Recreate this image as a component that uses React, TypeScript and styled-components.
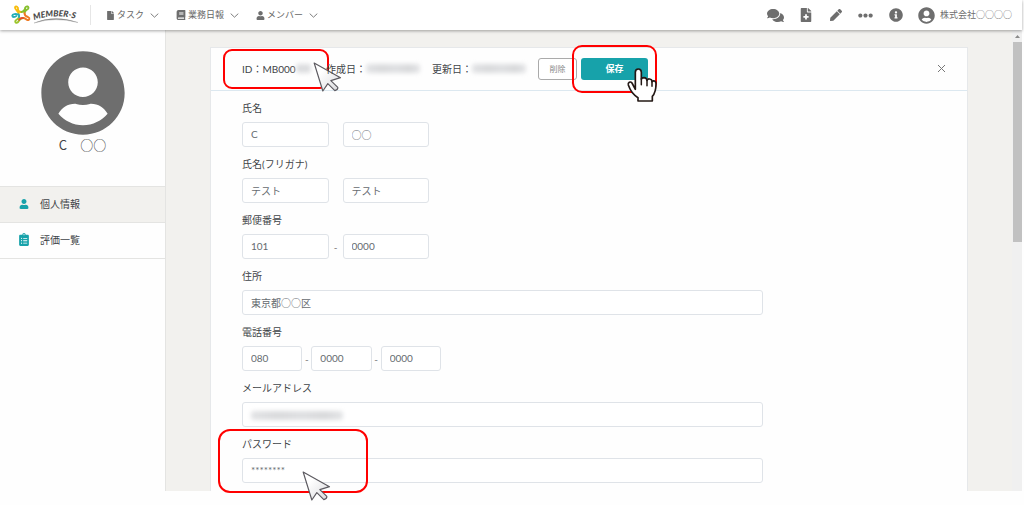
import React from "react";
import styled, { createGlobalStyle } from "styled-components";
import {
  FaBook,
  FaClipboardList,
  FaComments,
  FaEllipsisH,
  FaFile,
  FaFileMedical,
  FaInfoCircle,
  FaPen,
  FaUser,
  FaUserCircle,
} from "react-icons/fa";

const teal = "#17a2aa";
const sand = "#f2f1ee";
const line = "#dfe3e8";
const ink = "#3f4448";
const iconGray = "#6e6e6e";
const latinFirst = 'Lato, "Noto Sans CJK JP", sans-serif';
const kanjiFirst = '"Noto Sans CJK JP", sans-serif';

const GlobalStyle = createGlobalStyle`
  *, *::before, *::after { box-sizing: border-box; }
  body {
    margin: 0;
    background: #fefefe;
    color: ${ink};
    font-family: ${latinFirst};
    font-size: 10px;
    line-height: 16px;
  }
  button, input { font: inherit; color: inherit; }
`;

const Page = styled.div`
  min-height: 100vh;
  padding: 0 2px 15px 0;
  display: flex;
  flex-direction: column;
  overflow: hidden;
`;

const Header = styled.header`
  position: relative;
  z-index: 1;
  height: 30px;
  padding: 0 10px 0 11px;
  display: flex;
  align-items: center;
  background: #fff;
  box-shadow: 0 1px 3px rgba(0, 0, 0, 0.35);
`;

const LogoLink = styled.a`
  display: flex;
  width: 80px;
  height: 20px;
  border-right: 1px solid #e6e6e6;
`;

const Nav = styled.nav`
  display: flex;
  flex: 1;
  padding-left: 15px;
  gap: 17px;
`;

const NavButton = styled.button`
  display: flex;
  align-items: center;
  padding: 0;
  border: 0;
  background: none;
  font-size: 9px;
  color: #666;
  white-space: nowrap;
  svg { color: ${iconGray}; }
  span { margin: 0 6px 0 2px; }
`;

const IconButton = styled.button`
  display: flex;
  align-items: center;
  justify-content: center;
  width: 30px;
  height: 24px;
  padding: 0;
  border: 0;
  background: none;
  color: ${iconGray};
`;

const AccountButton = styled(IconButton)`
  width: auto;
  gap: 5px;
  padding-left: 7px;
  font-family: ${kanjiFirst};
  font-size: 9px;
  white-space: nowrap;
`;

const Body = styled.div`
  flex: 1;
  display: flex;
`;

const Sidebar = styled.aside`
  flex: none;
  width: 166px;
  border-right: 1px solid #e4e4e2;
  background: #fefefe;
`;

const Profile = styled.div`
  height: 156px;
  padding-top: 20px;
  display: flex;
  flex-direction: column;
  align-items: center;
  font-family: ${kanjiFirst};
  font-size: 13px;
  line-height: 18px;
  color: ${iconGray};
  p { margin: 0; color: ${ink}; }
`;

const SideLink = styled.a<{ $active?: boolean }>`
  display: flex;
  align-items: center;
  gap: 10px;
  height: ${(p) => (p.$active ? 37 : 36)}px;
  padding: 0 0 2px 18px;
  border-bottom: 1px solid #e4e4e2;
  border-top: ${(p) => (p.$active ? "1px solid #e4e4e2" : "0")};
  background: ${(p) => (p.$active ? sand : "transparent")};
  color: ${ink};
  text-decoration: none;
  svg { flex: none; width: 12px; color: ${teal}; }
`;

const Main = styled.main`
  flex: 1;
  min-width: 0;
  padding: 17px 44px 0;
  display: flex;
  background: ${sand};
`;

const Card = styled.form`
  flex: 1;
  min-width: 0;
  border: 1px solid #e6e8ea;
  border-bottom: 0;
  background: #fefefe;
`;

const CardHeader = styled.div`
  display: flex;
  align-items: center;
  height: 43px;
  padding: 0 15px 1px 31px;
  border-bottom: 1px solid #dce8f0;
  white-space: nowrap;
`;

const Meta = styled.div<{ $width: number }>`
  position: relative;
  display: flex;
  align-items: center;
  width: ${(p) => p.$width}px;
`;

const Smudge = styled.span<{ $width: number }>`
  display: block;
  width: ${(p) => p.$width}px;
  height: 9px;
  border-radius: 3px;
  background: linear-gradient(90deg, #e2e3e5, #d9dadc 30%, #dfe0e2 55%, #d8d9db 80%, #e4e5e7);
  filter: blur(2px);
`;

const DeleteButton = styled.button`
  width: 39px;
  height: 22px;
  padding: 0;
  border: 1px solid #aaa;
  border-radius: 3px;
  background: #fff;
  font-size: 8px;
  color: #888;
`;

const SaveSlot = styled.div`
  position: relative;
  margin-left: 4px;
`;

const SaveButton = styled.button`
  display: block;
  width: 67px;
  height: 22px;
  padding: 0;
  border: 0;
  border-radius: 3px;
  background: ${teal};
  font-size: 9px;
  font-weight: 700;
  color: #fff;
`;

const CloseButton = styled.button`
  display: flex;
  margin-left: auto;
  padding: 6px;
  border: 0;
  background: none;
  color: #777;
`;

const Fields = styled.div`
  width: 583px;
  max-width: 100%;
  padding: 9px 31px 8px;
  display: grid;
  gap: 9px;
`;

const Field = styled.fieldset`
  position: relative;
  min-width: 0;
  margin: 0;
  padding: 0;
  border: 0;
`;

const FieldLabel = styled.label`
  display: block;
  height: 22px;
`;

const Row = styled.div<{ $columns: string; $width?: string }>`
  display: grid;
  grid-template-columns: ${(p) => p.$columns};
  width: ${(p) => p.$width ?? "100%"};
  align-items: center;
  text-align: center;
  color: #777;
`;

const TextInput = styled.input<{ $kanji?: boolean }>`
  width: 100%;
  min-width: 0;
  height: 25px;
  padding: 0 8px 1px;
  border: 1px solid ${line};
  border-radius: 3px;
  background: #fff;
  color: #666b70;
  font-family: ${(p) => (p.$kanji ? kanjiFirst : latinFirst)};
`;

const FieldSmudge = styled.div`
  position: absolute;
  left: 9px;
  bottom: 7px;
`;

const Highlight = styled.div<{ $inset: string; $radius: number }>`
  position: absolute;
  inset: ${(p) => p.$inset};
  border: 2px solid #f00;
  border-radius: ${(p) => p.$radius}px;
  pointer-events: none;
`;

const Pointer = styled.svg<{ $left: number; $top: number }>`
  position: absolute;
  left: ${(p) => p.$left}px;
  top: ${(p) => p.$top}px;
  overflow: visible;
  pointer-events: none;
`;

const ScrollTrack = styled.div`
  flex: none;
  width: 10px;
  padding: 4px 0 0 1px;
  display: flex;
  flex-direction: column;
  align-items: center;
  gap: 3px;
  background: #f0f0f0;
`;

const ScrollThumb = styled.div`
  width: 9px;
  height: 200px;
  background: #c1c1c1;
`;

const Logo = () => (
  <svg width="70" height="20" viewBox="0 0 70 20" aria-label="MEMBER-S" role="img">
    <g fill="none" strokeWidth="1.9" strokeLinecap="round" strokeLinejoin="round">
      <path d="M7.800 9C7.500 6 3.500 4.500 4 2.300C5 0.500 7.500 2 7 4C7 6 8.500 7.200 10.500 7" stroke="#f8bd0c" />
      <path d="M10.500 7C13.500 6.500 14 4.500 14.300 2.500C15.500 0.500 18 1.500 17.300 3.300C16.500 5 14 5 13.500 8" stroke="#86bf2c" />
      <path d="M13.500 8C13.500 10.500 15 11.500 17 12C19.300 13 18.500 15.500 16.500 15C14.500 14.500 14.500 12.800 12 13" stroke="#f07a22" />
      <path d="M12 13C9 13 8.500 14.500 7.500 16.500C6.500 18.500 3.800 18 4.300 16C5 14.300 7.500 14.500 8 12" stroke="#9cc62c" />
      <path d="M12 13C10 12.900 8.900 13.500 8.200 14.700" stroke="#e94b2b" />
      <path d="M8 12C8.300 10.500 8 9.500 7 9.300C5 8.800 1.500 8.800 1.300 10.700C1.500 12.600 4 12.300 5.500 10.800" stroke="#25aeb5" />
    </g>
    <path id="logo-arc" d="M23 15Q44 8 68 14.500" fill="none" />
    <path d="M23 18Q44 9.500 67 17.500Q44 11.500 23 18Z" fill="#888" stroke="#888" strokeWidth="0.3" />
    <text fontFamily="Lato, sans-serif" fontSize="8.500" fontWeight="900" fontStyle="italic" fill="#4b4b4b">
      <textPath href="#logo-arc">MEMBER-S</textPath>
    </text>
  </svg>
);

const Chevron = () => (
  <svg width="9" height="5" viewBox="0 0 9 5" fill="none" stroke="currentColor" strokeWidth="0.9">
    <path d="M0.700 0.600L4.500 4.200L8.300 0.600" />
  </svg>
);

const Arrow = ({ left, top }: { left: number; top: number }) => (
  <Pointer $left={left} $top={top} width="27" height="28" viewBox="0 0 80 84" aria-hidden="true">
    <defs>
      <linearGradient id={`arrow-${left}`} x1="0" y1="0" x2="1" y2="1">
        <stop offset="0.300" stopColor="#fff" />
        <stop offset="1" stopColor="#d9d9dc" />
      </linearGradient>
    </defs>
    <path
      d="M0 0L79 44L50 53L71 73Q72 80 62 83L41 62L26 84Z"
      fill={`url(#arrow-${left})`}
      stroke="#5c5a60"
      strokeWidth="3.500"
      strokeLinejoin="round"
    />
  </Pointer>
);

const Hand = () => (
  <Pointer $left={46} $top={10} width="30" height="34" viewBox="0 0 90 102" aria-hidden="true">
    <path
      d="M25 64V13Q25 3 34 3Q43 3 43 13V34Q44 29 51 29Q59 30 60 37Q62 32 68 33Q75 34 75 41Q78 37 83 39Q87 41 87 47C87 64 84 76 76 85V99H33V89C20 81 9 66 4 51C2 43 10 39 15 45Z"
      fill="#fff"
      stroke="#231815"
      strokeWidth="5"
      strokeLinejoin="round"
    />
    <path d="M43 32V50M60 37V53M75 41V55" fill="none" stroke="#231815" strokeWidth="4.500" strokeLinecap="round" />
  </Pointer>
);

export default function App() {
  return (
    <>
      <GlobalStyle />
      <Page>
        <Header>
          <LogoLink href="#">
            <Logo />
          </LogoLink>
          <Nav>
            <NavButton type="button">
              <FaFile size={9} />
              <span>タスク</span>
              <Chevron />
            </NavButton>
            <NavButton type="button">
              <FaBook size={10} />
              <span>業務日報</span>
              <Chevron />
            </NavButton>
            <NavButton type="button">
              <FaUser size={9} />
              <span>メンバー</span>
              <Chevron />
            </NavButton>
          </Nav>
          <IconButton type="button" aria-label="チャット"><FaComments size={17} /></IconButton>
          <IconButton type="button" aria-label="新規作成"><FaFileMedical size={14} /></IconButton>
          <IconButton type="button" aria-label="編集"><FaPen size={12} /></IconButton>
          <IconButton type="button" aria-label="その他"><FaEllipsisH size={15} /></IconButton>
          <IconButton type="button" aria-label="情報"><FaInfoCircle size={14} /></IconButton>
          <AccountButton type="button">
            <FaUserCircle size={17} />
            <span>株式会社○○○○</span>
          </AccountButton>
        </Header>

        <Body>
          <Sidebar>
            <Profile>
              <FaUserCircle size={86} />
              <p>C　○○</p>
            </Profile>
            <nav>
              <SideLink href="#profile" $active>
                <FaUser size={10} />
                個人情報
              </SideLink>
              <SideLink href="#reviews">
                <FaClipboardList size={13} />
                評価一覧
              </SideLink>
            </nav>
          </Sidebar>

          <Main>
            <Card onSubmit={(e) => e.preventDefault()}>
              <CardHeader>
                <Meta $width={84}>
                  ID：MB000
                  <Smudge $width={15} />
                  <Highlight $inset="-12px -3px -12px -19px" $radius={9} />
                  <Arrow left={72} top={2} />
                </Meta>
                <Meta $width={106}>
                  作成日：
                  <Smudge $width={54} />
                </Meta>
                <Meta $width={106}>
                  更新日：
                  <Smudge $width={54} />
                </Meta>
                <DeleteButton type="button">削除</DeleteButton>
                <SaveSlot>
                  <SaveButton type="submit">保存</SaveButton>
                  <Highlight $inset="-13px -9px" $radius={10} />
                  <Hand />
                </SaveSlot>
                <CloseButton type="button" aria-label="閉じる">
                  <svg width="9" height="9" viewBox="0 0 9 9" stroke="currentColor">
                    <path d="M1 1L8 8M8 1L1 8" />
                  </svg>
                </CloseButton>
              </CardHeader>

              <Fields>
                <Field>
                  <FieldLabel htmlFor="name1">氏名</FieldLabel>
                  <Row $columns="1fr 14px 1fr" $width="187px">
                    <TextInput id="name1" defaultValue="C" />
                    <span />
                    <TextInput $kanji aria-label="氏名 名" defaultValue="○○" />
                  </Row>
                </Field>
                <Field>
                  <FieldLabel htmlFor="kana1">氏名(フリガナ)</FieldLabel>
                  <Row $columns="1fr 14px 1fr" $width="187px">
                    <TextInput id="kana1" defaultValue="テスト" />
                    <span />
                    <TextInput aria-label="フリガナ 名" defaultValue="テスト" />
                  </Row>
                </Field>
                <Field>
                  <FieldLabel htmlFor="zip1">郵便番号</FieldLabel>
                  <Row $columns="1fr 14px 1fr" $width="187px">
                    <TextInput id="zip1" defaultValue="101" />
                    <span>-</span>
                    <TextInput aria-label="郵便番号 下4桁" defaultValue="0000" />
                  </Row>
                </Field>
                <Field>
                  <FieldLabel htmlFor="address">住所</FieldLabel>
                  <Row $columns="1fr">
                    <TextInput $kanji id="address" defaultValue="東京都○○区" />
                  </Row>
                </Field>
                <Field>
                  <FieldLabel htmlFor="tel1">電話番号</FieldLabel>
                  <Row $columns="1fr 9px 1fr 9px 1fr" $width="199px">
                    <TextInput id="tel1" defaultValue="080" />
                    <span>-</span>
                    <TextInput aria-label="電話番号 2" defaultValue="0000" />
                    <span>-</span>
                    <TextInput aria-label="電話番号 3" defaultValue="0000" />
                  </Row>
                </Field>
                <Field>
                  <FieldLabel htmlFor="mail">メールアドレス</FieldLabel>
                  <Row $columns="1fr">
                    <TextInput id="mail" type="email" />
                  </Row>
                  <FieldSmudge>
                    <Smudge $width={92} />
                  </FieldSmudge>
                </Field>
                <Field>
                  <FieldLabel htmlFor="password">パスワード</FieldLabel>
                  <Row $columns="1fr">
                    <TextInput id="password" defaultValue="********" />
                  </Row>
                  <Highlight $inset="-7px 395px -10px -24px" $radius={12} />
                  <Arrow left={61} top={36} />
                </Field>
              </Fields>
            </Card>
          </Main>

          <ScrollTrack aria-hidden="true">
            <svg width="5" height="5" viewBox="0 0 5 5">
              <path d="M0 4L2.500 1L5 4Z" fill="#8a8a8a" />
            </svg>
            <ScrollThumb />
          </ScrollTrack>
        </Body>
      </Page>
    </>
  );
}
